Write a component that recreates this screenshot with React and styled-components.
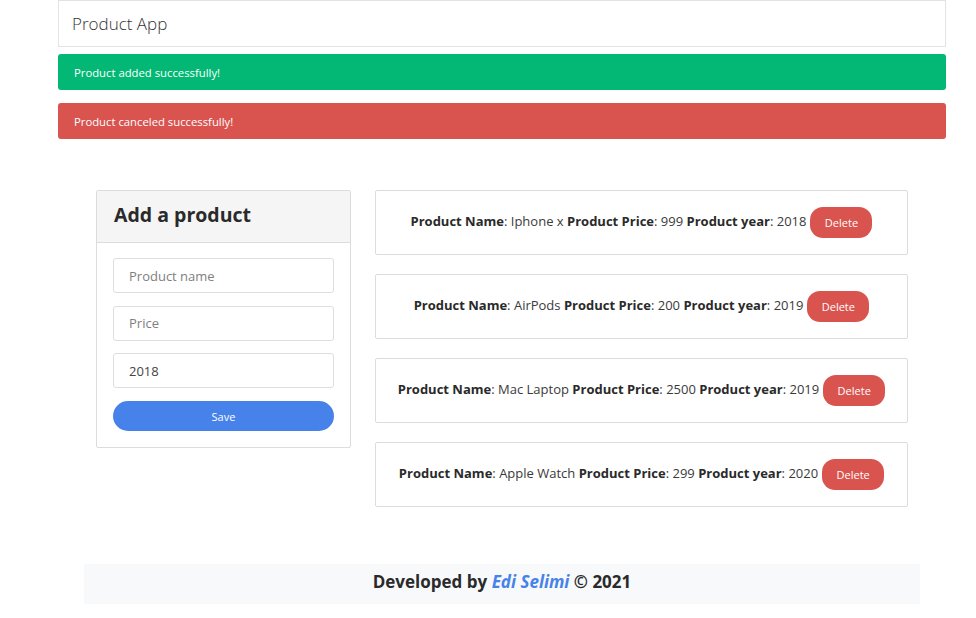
import React from "react";
import styled, { createGlobalStyle } from "styled-components";

const Global = createGlobalStyle`
  html, body { margin: 0; padding: 0; background: #fff; }
  body { font-family: "Open Sans", "Noto Sans", sans-serif; color: #212529; }
  * { box-sizing: border-box; }
`;

const Page = styled.div`
  display: flex;
  flex-direction: column;
  padding: 0 30px 0 58px;
`;

const Navbar = styled.nav`
  height: 47px;
  border: 1px solid #e3e3e3;
  display: flex;
  align-items: center;
  padding: 0 13px;
  font-size: 17px;
  font-weight: 300;
  color: #333;
`;

const Alert = styled.div`
  height: 36px;
  margin-top: ${(p) => p.$top}px;
  border-radius: 3px;
  background: ${(p) => p.$bg};
  color: #fff;
  font-size: 11.3px;
  display: flex;
  align-items: center;
  padding: 0 16px;
`;

const Main = styled.div`
  display: flex;
  align-items: flex-start;
  gap: 24px;
  margin: 51px 38px 0 38px;
`;

const FormCard = styled.div`
  width: 255px;
  flex: none;
  border: 1px solid #dcdcdc;
  border-radius: 2px;
`;

const FormHeader = styled.div`
  height: 52px;
  background: #f5f5f5;
  border-bottom: 1px solid #dcdcdc;
  display: flex;
  align-items: center;
  padding: 0 17px 4px;
  font-size: 19.5px;
  font-weight: 700;
  color: #2a2a2a;
`;

const FormBody = styled.div`
  padding: 15px 16px 16px 16px;
  display: flex;
  flex-direction: column;
  gap: 12.7px;
`;

const Input = styled.input`
  height: 35px;
  border: 1px solid #dedede;
  border-radius: 3px;
  padding: 0 15px;
  font-family: inherit;
  font-size: 13px;
  color: #444;
  outline: none;
  &::placeholder { color: #808080; }
`;

const SaveButton = styled.button`
  height: 30px;
  border: none;
  border-radius: 15px;
  background: #4682ea;
  color: #fff;
  font-family: inherit;
  font-size: 11px;
`;

const List = styled.div`
  flex: 1;
  display: flex;
  flex-direction: column;
  gap: 19px;
`;

const ProductCard = styled.div`
  height: 65px;
  border: 1px solid #dcdcdc;
  border-radius: 2px;
  display: flex;
  align-items: center;
  justify-content: center;
  gap: 4px;
  font-size: 13px;
  color: #3a3a3a;
  font-weight: 400;
`;

const Info = styled.span`
  margin-top: -4px;
  b { font-weight: 700; color: #2a2a2a; }
`;

const DeleteButton = styled.button`
  width: 62px;
  height: 31px;
  border: none;
  border-radius: 13px;
  background: #d9534f;
  color: #fff;
  font-family: inherit;
  font-size: 11px;
`;

const Footer = styled.footer`
  margin: 57px 26px 0 26px;
  height: 40px;
  padding-bottom: 5px;
  background: #f8f9fa;
  display: flex;
  align-items: center;
  justify-content: center;
  font-size: 17px;
  font-weight: 700;
  color: #2a2a2a;
  a { color: #4682ea; font-style: italic; text-decoration: none; }
`;

const products = [
  { name: "Iphone x", price: 999, year: 2018 },
  { name: "AirPods", price: 200, year: 2019 },
  { name: "Mac Laptop", price: 2500, year: 2019 },
  { name: "Apple Watch", price: 299, year: 2020 },
];

export default function App() {
  return (
    <>
      <Global />
      <Page>
        <Navbar>Product App</Navbar>
        <Alert $top={7} $bg="#03b875">Product added successfully!</Alert>
        <Alert $top={13} $bg="#d9534f">Product canceled successfully!</Alert>
        <Main>
          <FormCard>
            <FormHeader>Add a product</FormHeader>
            <FormBody>
              <Input placeholder="Product name" />
              <Input placeholder="Price" />
              <Input defaultValue="2018" />
              <SaveButton>Save</SaveButton>
            </FormBody>
          </FormCard>
          <List>
            {products.map((p) => (
              <ProductCard key={p.name}>
                <Info>
                  <b>Product Name</b>: {p.name} <b>Product Price</b>: {p.price}{" "}
                  <b>Product year</b>: {p.year}
                </Info>
                <DeleteButton>Delete</DeleteButton>
              </ProductCard>
            ))}
          </List>
        </Main>
        <Footer>
          <span>
            Developed by <a href="#">Edi Selimi</a> © 2021
          </span>
        </Footer>
      </Page>
    </>
  );
}
